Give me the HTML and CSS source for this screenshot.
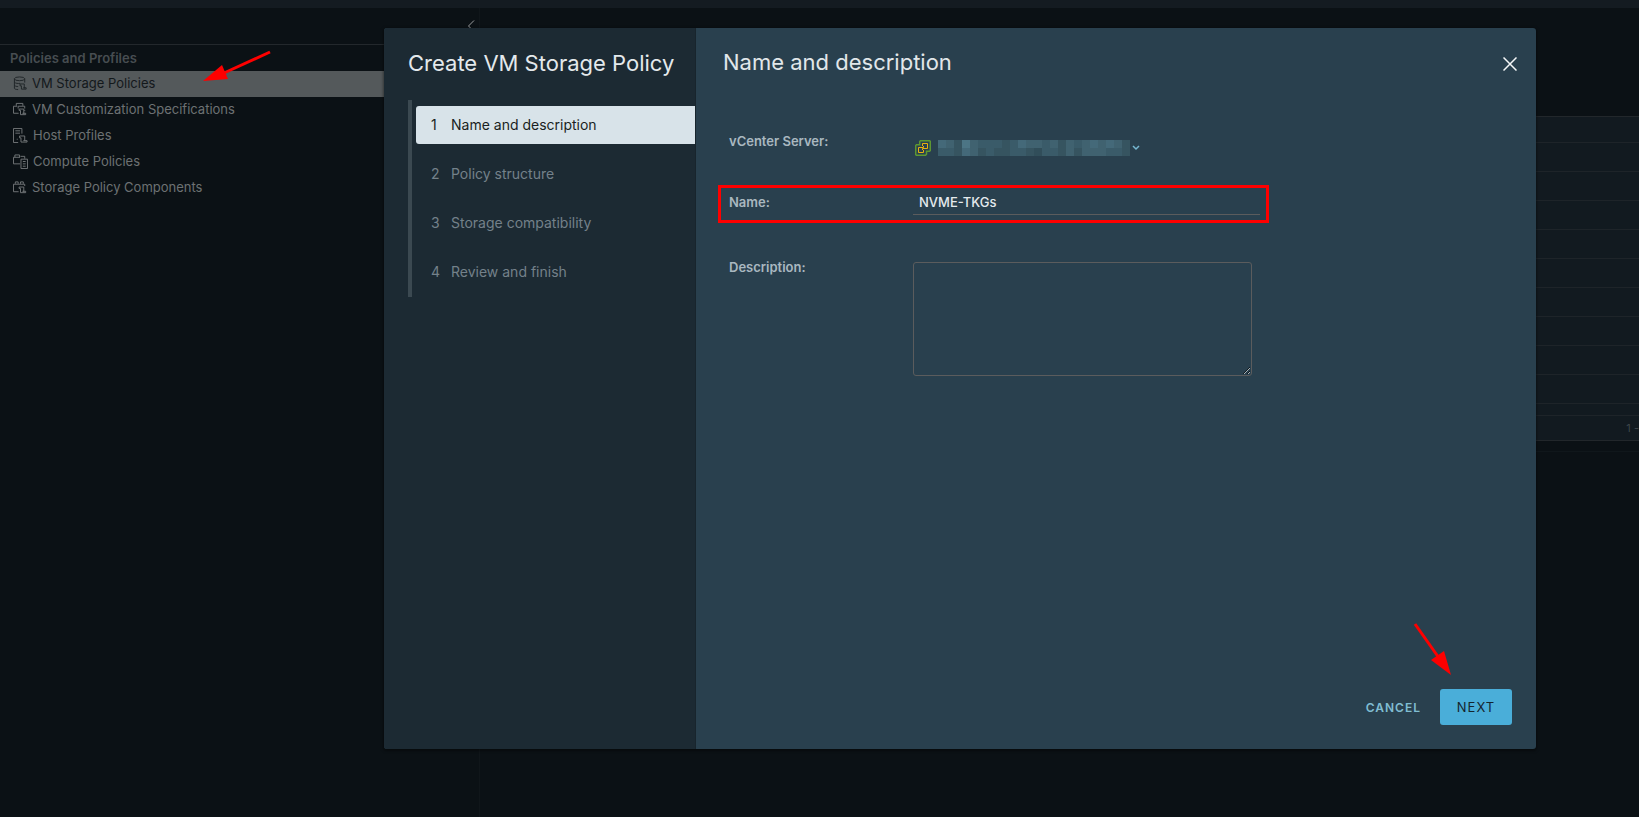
FILE: index.html
```html
<!DOCTYPE html>
<html lang="en">
<head>
<meta charset="utf-8">
<meta name="viewport" content="width=device-width, initial-scale=1">
<title>Create VM Storage Policy</title>
<link rel="stylesheet" href="styles.css">
</head>
<body>
<div class="app">
  <header class="topbar"></header>
  <div class="workspace">
    <aside class="sidebar">
      <div class="sidebar-head">
        <button class="collapse" type="button" aria-label="Collapse navigation">
          <svg width="8" height="12" viewBox="0 0 8 12"><path d="M7 .5 1.500 6 7 11.500"/></svg>
        </button>
      </div>
      <h2 class="sidebar-title">Policies and Profiles</h2>
      <nav class="side-nav">
        <a class="side-link selected" href="#">
          <svg class="side-icon" viewBox="0 0 16 16"><ellipse cx="7" cy="3" rx="5.500" ry="2"/><path d="M1.500 3v10c0 .8 1.500 1.500 4 1.500M12.500 3v4M1.500 6.500c1 1.500 4 1.700 6 1.300M1.500 10c1 1 2.500 1.300 4 1.200M7.500 8.500h4.500v5M7.500 8.500v2h1.500v3.500h5v-1.500h-3"/></svg>
          <span>VM Storage Policies</span>
          <svg class="arrow arrow-side" width="68" height="32" viewBox="0 0 68 32"><path class="shaft" d="M67 1 21 22"/><path class="head" d="m0 30 19-16 6 14z"/></svg>
        </a>
        <a class="side-link" href="#">
          <svg class="side-icon" viewBox="0 0 16 16"><path d="M3.500 4V1.500h7V4M6 12H.5V4.500h4M5.500 7V4.500h7V7M6.500 7.500h5V13M6.500 7.500V9H8v4.500h5.500V12H10M13 9h-1"/></svg>
          <span>VM Customization Specifications</span>
        </a>
        <a class="side-link wide" href="#">
          <svg class="side-icon" viewBox="0 0 16 16"><path d="M9.500 6V.5h-9v15h5M2.500 3h5M2.500 5.500h5M4 12h1M7 8.500h5.500v5M7 8.500v2h1.500V15H15v-1.500h-4"/></svg>
          <span>Host Profiles</span>
        </a>
        <a class="side-link wide" href="#">
          <svg class="side-icon" viewBox="0 0 16 16"><path d="M2 3.500V1h5v2.500M7.500 10.500h-7v-7h7M8 2.500h4.500V5M8.500 5.500h7v10h-7zM10.500 8h3M10.500 10.500h3M10.500 13h3"/></svg>
          <span>Compute Policies</span>
        </a>
        <a class="side-link" href="#">
          <svg class="side-icon" viewBox="0 0 16 16"><path d="M2.500 4V2h3v2M8 4V2h3v2M6 12.500H.5v-8h12v2M6.500 7.500h5V13M6.500 7.500V9H8v4.500h5.500V12H10"/></svg>
          <span>Storage Policy Components</span>
        </a>
      </nav>
    </aside>
    <main class="content">
      <div class="datagrid">
        <div class="grid-head"></div>
        <div class="grid-row"></div><div class="grid-row"></div><div class="grid-row"></div>
        <div class="grid-row"></div><div class="grid-row"></div><div class="grid-row"></div>
        <div class="grid-row"></div><div class="grid-row"></div><div class="grid-row"></div>
        <div class="grid-gap"></div>
        <div class="grid-foot">1 -</div>
      </div>
      <div class="grid-end"></div>
    </main>
  </div>

  <div class="overlay">
    <section class="wizard" role="dialog" aria-labelledby="wizard-title">
      <div class="wizard-nav">
        <h1 class="wizard-title" id="wizard-title">Create VM Storage Policy</h1>
        <div class="steps">
          <button class="step active" type="button"><span class="step-no">1</span>Name and description</button>
          <button class="step" type="button"><span class="step-no">2</span>Policy structure</button>
          <button class="step" type="button"><span class="step-no">3</span>Storage compatibility</button>
          <button class="step" type="button"><span class="step-no">4</span>Review and finish</button>
        </div>
      </div>
      <form class="wizard-main">
        <header class="page-head">
          <h2 class="page-title">Name and description</h2>
          <button class="close" type="button" aria-label="Close">
            <svg width="14" height="14" viewBox="0 0 14 14"><path d="m.5.5 13 13M13.500.5l-13 13"/></svg>
          </button>
        </header>
        <div class="fields">
          <div class="field field-server">
            <label for="server">vCenter Server:</label>
            <button class="server" id="server" type="button">
              <svg class="vc-icon" width="16" height="16" viewBox="0 0 16 16"><path class="vc-outer" d="M5.500.7h9.100l.7.700v9.100l-.7.700h-3.100v3.100l-1 1H1.400l-.7-.7V5.500l.7-.7h3.300V1.500z"/><path class="vc-inner" d="M7.500 6V3.500h5v5H10M8.500 10v2.500h-5v-5H6M6 7.500h2.500V6M10 8.500H7.500V10"/></svg>
              <svg class="redacted" width="192" height="16" viewBox="0 0 24 2" preserveAspectRatio="none" shape-rendering="crispEdges">
                <path fill="#3a5b69" d="M0 0h24v2H0z"/>
                <path fill="#446979" d="M0 0h1v1H0zM10 0h1v1h-1zM19 0h1v1h-1zM21 0h1v1h-1zM3 1h1v1H3z"/>
                <path fill="#4c7585" d="M3 0h1v1H3z"/>
                <path fill="#406270" d="M1 0h1v1H1zM4 0h1v1H4zM11 0h2v1h-2zM14 0h1v1h-1zM16 0h1v1h-1zM18 0h1v1h-1zM20 0h1v1h-1zM22 0h1v1h-1zM4 1h1v1H4zM16 1h1v1h-1zM18 1h3v1h-3z"/>
                <path fill="#365460" d="M2 0h1v2H2zM8 0h1v1H8zM15 0h1v2h-1zM23 0h1v2h-1zM5 1h1v1H5zM7 1h2v1H7zM11 1h1v1h-1zM17 1h1v1h-1z"/>
                <path fill="#314e5a" d="M12 1h1v1h-1z"/>
              </svg>
              <svg class="caret" width="8" height="6" viewBox="0 0 8 6"><path d="m1 1 3 3 3-3"/></svg>
            </button>
          </div>
          <div class="field field-name">
            <label for="name">Name:</label>
            <input class="name-input" id="name" type="text" value="NVME-TKGs">
          </div>
          <div class="field field-desc">
            <label for="desc">Description:</label>
            <textarea class="desc-input" id="desc"></textarea>
          </div>
        </div>
        <footer class="actions">
          <button class="btn" type="button">CANCEL</button>
          <button class="btn primary" type="submit">NEXT</button>
          <svg class="arrow arrow-next" width="37" height="52" viewBox="0 0 37 52"><path class="shaft" d="m1 1 24 34"/><path class="head" d="M37 52 17 37l13-9z"/></svg>
        </footer>
      </form>
    </section>
  </div>
</div>
</body>
</html>
```
FILE: styles.css
```css
* { box-sizing: border-box; }

body {
  margin: 0;
  background: #0b1115;
  font-family: Inter, "Open Sans", sans-serif;
  font-size: 13px;
}

h1, h2 { margin: 0; font-weight: 400; }
button { font-family: inherit; border: 0; background: none; padding: 0; }
svg { display: block; fill: none; stroke: currentColor; flex: none; }

.app {
  position: relative;
  display: flex;
  flex-direction: column;
  min-height: 100vh;
}

.topbar { height: 8px; background: #141b21; }
.workspace { flex: 1; display: flex; }

/* Navigation behind the dialog */
.sidebar { width: 480px; border-right: 1px solid #10161a; color: #6d7173; }
.sidebar-head {
  display: flex;
  justify-content: flex-end;
  padding: 12px 4px 0;
  height: 37px;
  border-bottom: 1px solid #23282c;
}
.collapse { color: #9a9d9f; height: 12px; }
.sidebar-title {
  padding: 0 10px;
  line-height: 26px;
  font-size: 13px;
  font-weight: 600;
  color: #474d51;
}
.side-link {
  position: relative;
  display: flex;
  align-items: center;
  gap: 4px;
  height: 26px;
  padding: 0 13px 2px;
  color: inherit;
  text-decoration: none;
}
.side-link.wide { gap: 5px; }
.side-link.selected { background: #54595b; color: #13181b; }
.side-icon { width: 15px; height: 15px; color: #73787a; }
.selected .side-icon { color: #1f2427; }

.content { flex: 1; padding-top: 108px; }
.datagrid {
  border-top: 1px solid #22272b;
  border-bottom: 1px solid #22272b;
  background: #121a20;
}
.grid-head { height: 26px; border-bottom: 1px solid #1e2429; }
.grid-row { height: 29px; border-bottom: 1px solid #1e2429; }
.grid-gap { height: 12px; border-bottom: 1px solid #1e2429; }
.grid-foot {
  display: flex;
  justify-content: flex-end;
  line-height: 24px;
  font-size: 11px;
  color: #3e464b;
}
.grid-end { height: 11px; border-bottom: 1px solid #10171b; }

/* Dialog */
.overlay {
  position: absolute;
  inset: 0;
  display: flex;
  padding: 28px 103px 68px 384px;
}
.wizard {
  flex: 1;
  display: grid;
  grid-template-columns: 312px 1fr;
  border-radius: 3px;
  background: #29404e;
  box-shadow: 0 1px 3px 1px rgba(0, 0, 0, .4);
}
.wizard-nav {
  padding: 20px 0 0 24px;
  border-right: 1px solid #18252d;
  border-radius: 3px 0 0 3px;
  background: #1c2a33;
}
.wizard-title { font-size: 22px; line-height: 30px; color: #e4e9ec; white-space: nowrap; }
.steps {
  display: flex;
  flex-direction: column;
  gap: 11px;
  margin-top: 22px;
  padding: 6px 0 6px 4px;
  border-left: 4px solid #3b4951;
}
.step {
  display: flex;
  align-items: center;
  height: 38px;
  padding: 0 0 1px 15px;
  border-radius: 3px 0 0 3px;
  font-size: 14px;
  color: #74818a;
}
.step.active { background: #d8e3e9; color: #1a1f22; }
.step-no { width: 20px; text-align: left; }

.wizard-main { display: flex; flex-direction: column; padding: 20px 24px 24px 22px; }
.page-head { display: flex; justify-content: space-between; align-items: center; padding-left: 5px; }
.page-title { font-size: 22px; line-height: 28px; color: #e1e7ea; }
.close { width: 14px; height: 14px; margin: 4px -5px 0 0; color: #f5f7f8; stroke-width: 1.500; }

.fields { flex: 1; padding-top: 52px; }
.field { display: grid; grid-template-columns: 184px 1fr; padding-left: 11px; }
.field label { line-height: 20px; font-weight: 600; color: #a9b8c0; }
.field-server { padding-top: 3px; height: 57px; }
.server { display: flex; align-items: center; gap: 7px; height: 16px; margin: 9px 0 0 2px; justify-self: start; }
.vc-outer { stroke: #5d9732; stroke-width: 1.500; }
.vc-inner { stroke: #e8b00e; }
.redacted { stroke: none; }
.caret { margin-left: -5px; color: #76b7d1; stroke-width: 1.500; }

.field-name {
  width: 551px;
  height: 38px;
  padding: 4px 6px 0 8px;
  border: 3px solid #fe0000;
}
.field-name label { line-height: 20px; }
.name-input {
  height: 23px;
  padding: 0 6px 3px;
  border: 0;
  border-bottom: 1px solid #5b5c5d;
  background: none;
  color: #e5eaed;
  font: 500 13px Inter, sans-serif;
}

.field-desc { margin-top: 34px; }
.desc-input {
  width: 339px;
  height: 114px;
  margin-top: 5px;
  border: 1px solid #5b5c5d;
  border-radius: 3px;
  background: none;
  color: #e5eaed;
  font: inherit;
  resize: both;
}

.actions { position: relative; display: flex; justify-content: flex-end; gap: 3px; }
.btn {
  height: 36px;
  padding: 0 16px;
  border-radius: 3px;
  font-size: 12px;
  font-weight: 600;
  letter-spacing: 1px;
  color: #80bdd2;
}
.btn.primary { width: 72px; background: #4aaed9; color: #14252e; font-size: 13px; font-weight: 400; }

/* Callouts */
.arrow { position: absolute; overflow: visible; }
.arrow .shaft { stroke: #fe0000; stroke-width: 3; }
.arrow .head { fill: #fe0000; stroke: none; }
.arrow-side { left: 203px; top: -20px; }
.arrow-next { right: 61px; bottom: 50px; }
```
